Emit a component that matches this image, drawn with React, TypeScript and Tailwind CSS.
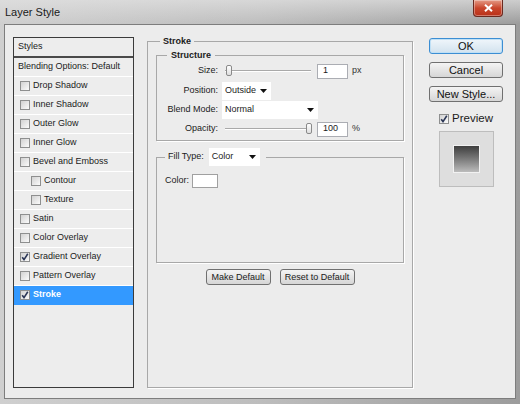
import React from "react";

const Check = ({ on }: { on?: boolean }) => (
  <span className="flex h-[10px] w-[10px] shrink-0 items-center justify-center border border-[#8e8f8f] bg-linear-to-br from-[#d2d2d2] to-[#fbfbfb]">
    {on && (
      <svg width="8" height="8" viewBox="0 0 8 8">
        <path d="M1.2 4.2 L3 6.6 L6.8 0.8" fill="none" stroke="#2b3656" strokeWidth="1.6" />
      </svg>
    )}
  </span>
);

const Arrow = () => (
  <svg width="7" height="4" viewBox="0 0 7 4" className="shrink-0">
    <path d="M0 0 H7 L3.5 4 Z" fill="#111" />
  </svg>
);

const Slider = ({ at }: { at: "start" | "end" }) => (
  <div className="relative h-[12px] w-[92px]">
    <div className="absolute left-[3px] right-[3px] top-[5px] h-[2px] border-t border-[#a9a9a9] border-b border-b-white" />
    <div
      className={
        "absolute top-0 h-[11px] w-[6px] rounded-[2px] border border-[#8a8a8a] bg-linear-to-b from-white to-[#dedede] " +
        (at === "start" ? "left-[4px]" : "right-[2px]")
      }
    />
  </div>
);

const Btn = ({ label, primary, w }: { label: string; primary?: boolean; w: string }) => (
  <button
    className={
      "flex h-[16px] items-center justify-center rounded-[3px] border text-[11px] leading-none text-[#111] " +
      w +
      (primary
        ? " border-[#3c8ed3] bg-linear-to-b from-[#f0f6fb] to-[#d2e2ee] shadow-[inset_0_0_0_1px_#bfe0f6]"
        : " border-[#707070] bg-linear-to-b from-[#f4f4f4] to-[#d6d6d6]")
    }
  >
    {label}
  </button>
);

const effects = [
  { name: "Drop Shadow" },
  { name: "Inner Shadow" },
  { name: "Outer Glow" },
  { name: "Inner Glow" },
  { name: "Bevel and Emboss" },
  { name: "Contour", sub: true },
  { name: "Texture", sub: true },
  { name: "Satin" },
  { name: "Color Overlay" },
  { name: "Gradient Overlay", on: true },
  { name: "Pattern Overlay" },
  { name: "Stroke", on: true, active: true },
];

export default function App() {
  return (
    <div className="flex h-[404px] w-[520px] flex-col overflow-hidden bg-linear-to-r from-[#cfcfcf] via-[#bdbdbd] to-[#9c9c9c] font-['Liberation_Sans',Arial,sans-serif] text-[9px] text-[#1b1b1b]">
      {/* title bar */}
      <div className="relative flex h-[24px] shrink-0 items-center bg-linear-to-b from-[#e2e2e2]/70 to-transparent pl-[5px]">
        <span className="text-[11px] text-[#1a1a1a]">Layer Style</span>
        <div className="absolute right-[17px] top-0 flex h-[17px] w-[30px] items-center justify-center rounded-b-[4px] border border-t-0 border-[#6b2a20] bg-linear-to-b from-[#e49a86] via-[#c9462c] to-[#b93019] shadow-[inset_0_0_0_1px_rgba(255,255,255,0.35)]">
          <svg width="9" height="8" viewBox="0 0 9 8">
            <path d="M1 0.8 L8 7.2 M8 0.8 L1 7.2" stroke="#fff" strokeWidth="2" />
          </svg>
        </div>
      </div>

      {/* dialog body */}
      <div className="mx-[4px] mb-[5px] flex flex-1 items-start border border-[#7d7d7d] bg-[#ececec] pl-[8px] pt-[10px]">
        {/* styles list */}
        <div className="mt-[2px] flex h-[351px] w-[121px] shrink-0 flex-col border border-[#3b3b3b] bg-[#ededed]">
          <div className="flex h-[20px] items-center border-b-2 border-[#4a4a4a] pl-[4px]">Styles</div>
          <div className="flex h-[19px] items-center border-b border-white pl-[4px]">Blending Options: Default</div>
          {effects.map((e) => (
            <div
              key={e.name}
              className={
                "flex h-[19px] items-center gap-[3px] border-b " +
                (e.sub ? "pl-[17px] " : "pl-[6px] ") +
                (e.active ? "border-[#3399ff] bg-[#3399ff] font-bold text-white" : "border-white")
              }
            >
              <Check on={e.on} />
              <span>{e.name}</span>
            </div>
          ))}
        </div>

        {/* stroke panel */}
        <fieldset className="ml-[13px] h-[353px] w-[266px] shrink-0 border border-[#a8a8a8] shadow-[1px_1px_0_#fff]">
          <legend className="ml-[12px] h-[12px] px-[3px] font-bold leading-[12px]">Stroke</legend>

          <fieldset className="mx-[8px] mt-[2px] border border-[#a8a8a8] pb-[2px] shadow-[1px_1px_0_#fff]">
            <legend className="ml-[10px] h-[12px] px-[4px] font-bold leading-[12px]">Structure</legend>
            <div className="flex h-[20px] items-center">
              <span className="w-[61px] text-right">Size:</span>
              <div className="ml-[4px]">
                <Slider at="start" />
              </div>
              <div className="ml-[3px] flex h-[15px] w-[31px] items-center border border-[#abadb3] bg-white pl-[5px]">1</div>
              <span className="ml-[4px] text-[#333]">px</span>
            </div>
            <div className="flex h-[19px] items-center">
              <span className="w-[61px] text-right">Position:</span>
              <div className="ml-[4px] flex h-[18px] w-[49px] items-center justify-between bg-white pl-[3px] pr-[4px]">
                <span>Outside</span>
                <Arrow />
              </div>
            </div>
            <div className="flex h-[20px] items-center">
              <span className="w-[61px] text-right">Blend Mode:</span>
              <div className="ml-[4px] flex h-[18px] w-[96px] items-center justify-between bg-white pl-[3px] pr-[4px]">
                <span>Normal</span>
                <Arrow />
              </div>
            </div>
            <div className="flex h-[18px] items-center">
              <span className="w-[61px] text-right">Opacity:</span>
              <div className="ml-[4px]">
                <Slider at="end" />
              </div>
              <div className="ml-[3px] flex h-[15px] w-[31px] items-center border border-[#abadb3] bg-white pl-[5px]">100</div>
              <span className="ml-[4px] text-[#333]">%</span>
            </div>
          </fieldset>

          <fieldset className="mx-[8px] mt-[7px] h-[115px] border border-[#a8a8a8] shadow-[1px_1px_0_#fff]">
            <legend className="ml-[8px] flex h-[18px] items-center pl-[3px] pr-[6px]">
              <span>Fill Type:</span>
              <div className="ml-[5px] flex h-[18px] w-[51px] items-center justify-between bg-white pl-[3px] pr-[4px]">
                <span>Color</span>
                <Arrow />
              </div>
            </legend>
            <div className="mt-[8px] flex items-center pl-[8px]">
              <span>Color:</span>
              <div className="ml-[3px] h-[14px] w-[26px] border border-[#a0a0a0] bg-white" />
            </div>
          </fieldset>

          <div className="mt-[6px] flex justify-center gap-[9px]">
            <button className="h-[16px] w-[65px] rounded-[3px] border border-[#707070] bg-linear-to-b from-[#f4f4f4] to-[#d6d6d6] text-[9px] leading-none">
              Make Default
            </button>
            <button className="h-[16px] w-[75px] rounded-[3px] border border-[#707070] bg-linear-to-b from-[#f4f4f4] to-[#d6d6d6] text-[9px] leading-none">
              Reset to Default
            </button>
          </div>
        </fieldset>

        {/* right buttons */}
        <div className="ml-[16px] mt-[3px] flex w-[74px] shrink-0 flex-col items-center">
          <Btn label="OK" primary w="w-[74px]" />
          <div className="mt-[8px]">
            <Btn label="Cancel" w="w-[74px]" />
          </div>
          <div className="mt-[8px]">
            <Btn label="New Style..." w="w-[74px]" />
          </div>
          <div className="mt-[8px] flex items-center gap-[3px] text-[11.5px]">
            <Check on />
            <span>Preview</span>
          </div>
          <div className="mt-[4px] flex h-[56px] w-[55px] items-center justify-center border border-[#bdbdbd] bg-[#dedede]">
            <div className="h-[28px] w-[27px] border border-[#f2f2f2] bg-linear-to-b from-[#3f3f3f] to-[#bcbcbc]" />
          </div>
        </div>
      </div>
    </div>
  );
}
